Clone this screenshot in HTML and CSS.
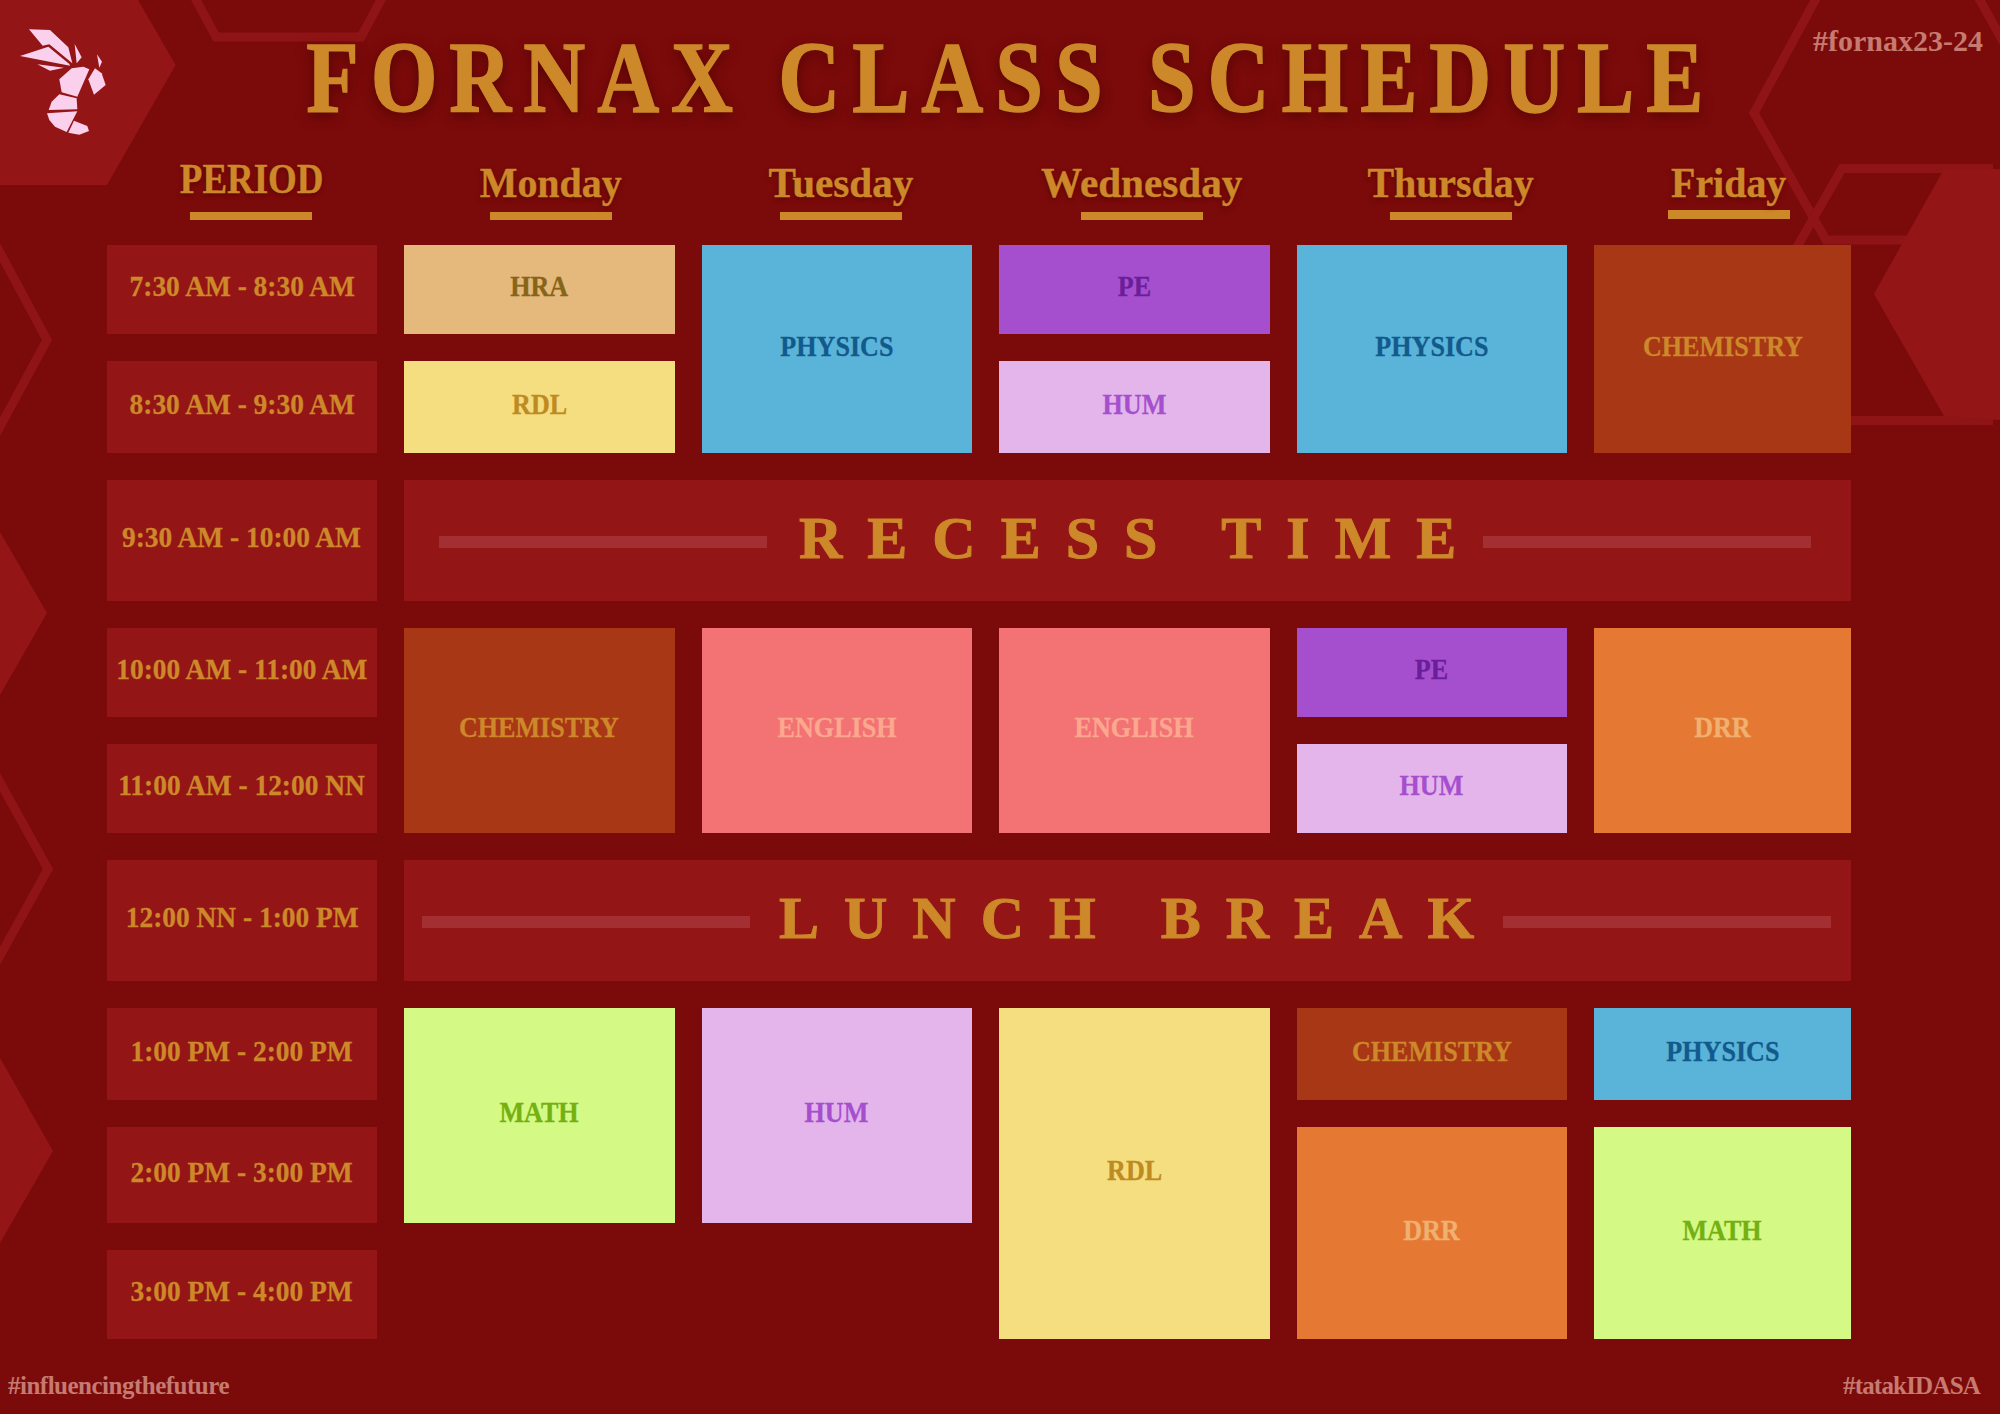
FILE: index.html
```html
<!DOCTYPE html>
<html lang="en">
<head>
<meta charset="utf-8">
<title>Fornax Class Schedule</title>
<link rel="stylesheet" href="styles.css">
</head>
<body>
<main class="page">
  <svg class="decor" viewBox="0 0 2000 1414" aria-hidden="true">
    <g class="decor-line">
      <path d="M194 -4 L216 37 H361 L383 -4"/>
      <path d="M1818 -5 L1754 113 L1826 240 H1960"/>
      <path d="M1977 -5 L2005 45"/>
      <path d="M1993 168.500 H1842 L1770 294 L1842 420.500 H1993"/>
      <path d="M-4 245 L47 340 L-4 434"/>
      <path d="M-4 775 L48 869 L-4 963"/>
    </g>
    <g class="decor-fill">
      <polygon points="0,0 138,0 175.600,65 107,185 0,185"/>
      <polygon points="1944,169 2000,169 2000,420 1944,416 1874,294"/>
      <polygon points="0,532 47,613 0,695"/>
      <polygon points="0,1058 53,1151 0,1243"/>
    </g>
  </svg>

  <svg class="logo" viewBox="0 0 180 190" aria-label="Fornax hornet logo">
    <g transform="scale(0.3333)">
      <polygon points="87,88 150,90 205,142 217,190 148,133 128,137"/>
      <polygon points="60,168 145,140 208,192 210,197"/>
      <polygon points="112,193 192,203 150,212"/>
      <polygon points="224,132 245,172 230,190"/>
      <polygon points="291,163 306,185 298,203"/>
      <polygon points="285,205 305,220 317,255 282,284 265,238"/>
      <polygon points="215,205 250,200 268,208 232,290 185,277 178,238"/>
      <polygon points="178,283 230,295 232,328 146,330 155,305"/>
      <polygon points="141,340 232,334 200,396 165,380 148,360"/>
      <polygon points="222,362 262,378 267,393 238,404 205,398"/>
    </g>
  </svg>

  <p class="tag tag-top">#fornax23-24</p>

  <header class="title-bar">
    <h1 class="title">FORNAX CLASS SCHEDULE</h1>
  </header>

  <div class="heads">
    <div class="head head-period"><span class="head-label">PERIOD</span><i class="head-rule"></i></div>
    <div class="head"><span class="head-label">Monday</span><i class="head-rule"></i></div>
    <div class="head head-wide"><span class="head-label">Tuesday</span><i class="head-rule"></i></div>
    <div class="head head-wide"><span class="head-label">Wednesday</span><i class="head-rule"></i></div>
    <div class="head"><span class="head-label">Thursday</span><i class="head-rule"></i></div>
    <div class="head head-friday"><span class="head-label">Friday</span><i class="head-rule"></i></div>
  </div>

  <section class="grid">
    <div class="time r1"><span>7:30 AM - 8:30 AM</span></div>
    <div class="time r2"><span>8:30 AM - 9:30 AM</span></div>
    <div class="time r3"><span>9:30 AM - 10:00 AM</span></div>
    <div class="time r4"><span>10:00 AM - 11:00 AM</span></div>
    <div class="time r5"><span>11:00 AM - 12:00 NN</span></div>
    <div class="time r6"><span>12:00 NN - 1:00 PM</span></div>
    <div class="time r7"><span>1:00 PM - 2:00 PM</span></div>
    <div class="time r8"><span>2:00 PM - 3:00 PM</span></div>
    <div class="time r9"><span>3:00 PM - 4:00 PM</span></div>

    <div class="cell hra mon r1"><span>HRA</span></div>
    <div class="cell rdl mon r2"><span>RDL</span></div>
    <div class="cell physics tue r1-2"><span>PHYSICS</span></div>
    <div class="cell pe wed r1"><span>PE</span></div>
    <div class="cell hum wed r2"><span>HUM</span></div>
    <div class="cell physics thu r1-2"><span>PHYSICS</span></div>
    <div class="cell chem fri r1-2"><span>CHEMISTRY</span></div>

    <div class="band band-recess r3">
      <i class="band-line"></i><span class="band-text">RECESS TIME</span><i class="band-line"></i>
    </div>

    <div class="cell chem mon r4-5"><span>CHEMISTRY</span></div>
    <div class="cell english tue r4-5"><span>ENGLISH</span></div>
    <div class="cell english wed r4-5"><span>ENGLISH</span></div>
    <div class="cell pe thu r4"><span>PE</span></div>
    <div class="cell hum thu r5"><span>HUM</span></div>
    <div class="cell drr fri r4-5"><span>DRR</span></div>

    <div class="band band-lunch r6">
      <i class="band-line"></i><span class="band-text">LUNCH BREAK</span><i class="band-line"></i>
    </div>

    <div class="cell math mon r7-8"><span>MATH</span></div>
    <div class="cell hum tue r7-8"><span>HUM</span></div>
    <div class="cell rdl wed r7-9"><span>RDL</span></div>
    <div class="cell chem thu r7"><span>CHEMISTRY</span></div>
    <div class="cell drr thu r8-9"><span>DRR</span></div>
    <div class="cell physics fri r7"><span>PHYSICS</span></div>
    <div class="cell math fri r8-9"><span>MATH</span></div>
  </section>

  <footer class="foot">
    <p class="tag">#influencingthefuture</p>
    <p class="tag tag-tatak">#tatakIDASA</p>
  </footer>
</main>
</body>
</html>
```

FILE: styles.css
```css
* { box-sizing: border-box; }
html, body { margin: 0; padding: 0; }
body { background: #7b0a0a; font-family: "Liberation Serif", "DejaVu Serif", serif; }

.page {
  position: relative;
  width: 2000px;
  height: 1414px;
  overflow: hidden;
  background: #7b0a0a;
  color: #cd8829;
  font-weight: 700;
}

.decor { position: absolute; left: 0; top: 0; width: 2000px; height: 1414px; }
.decor-line path { fill: none; stroke: #8f1416; stroke-width: 9; }
.decor-fill polygon { fill: #941515; }

.logo { position: absolute; left: 0; top: 0; width: 180px; height: 190px; }
.logo polygon { fill: #fbd0ec; }

.tag { margin: 0; font-size: 25px; line-height: 30px; color: #c67a70; letter-spacing: -0.5px; }
.tag-top { position: absolute; left: 1813px; top: 26px; font-size: 30px; letter-spacing: 0; }
.tag-tatak { letter-spacing: -0.8px; }

.title-bar { position: relative; height: 150px; display: flex; justify-content: center; }
.title {
  margin: 28px 0 0 22px;
  font-size: 101px;
  line-height: 100px;
  letter-spacing: 14px;
  white-space: nowrap;
  transform: scaleX(0.85);
  -webkit-text-stroke: 1.5px #cd8829;
  text-shadow: 0 4px 14px rgba(70, 0, 0, 0.75);
}

.heads {
  position: relative;
  height: 95px;
  padding: 0 0 25px 130px;
  display: grid;
  grid-template-columns: 241px 360px 220px 382px 236px 320px;
  align-items: end;
}
.head { display: flex; flex-direction: column; align-items: center; }
.head-label {
  font-size: 42px;
  line-height: 46px;
  white-space: nowrap;
  transform: scaleX(0.95);
  -webkit-text-stroke: 0.4px #cd8829;
  text-shadow: 0 2px 5px rgba(70, 0, 0, 0.6);
}
.head-rule { display: block; width: 122px; height: 8.500px; margin-top: 6px; background: #cd8829; }
.head-period .head-label { transform: scaleX(0.88); margin: 0 0 4px 3px; }
.head-wide .head-label { transform: scaleX(0.98); }
.head-friday { margin-bottom: 1.500px; }
.head-friday .head-rule { margin-top: 4.500px; }

.grid {
  position: relative;
  margin-left: 106.500px;
  display: grid;
  grid-template-columns: repeat(5, 270.500px) 257px;
  grid-template-rows: 89px 92px 121px 89px 89px 121px 92px 96px 89px;
  gap: 27px;
}

.time, .cell, .band {
  display: flex;
  align-items: center;
  justify-content: center;
  font-size: 29px;
  line-height: 32px;
  padding-bottom: 7px;
  white-space: nowrap;
}
.band { padding-bottom: 5px; }
.time { grid-column: 1; background: #941515; }
.time span { transform: scaleX(0.945); -webkit-text-stroke: 0.3px currentColor; }
.cell span { transform: scaleX(0.9); -webkit-text-stroke: 0.3px currentColor; }

.r1 { grid-row: 1; }
.r2 { grid-row: 2; }
.r3 { grid-row: 3; }
.r4 { grid-row: 4; }
.r5 { grid-row: 5; }
.r6 { grid-row: 6; }
.r7 { grid-row: 7; }
.r8 { grid-row: 8; }
.r9 { grid-row: 9; }
.r1-2 { grid-row: 1 / span 2; }
.r4-5 { grid-row: 4 / span 2; }
.r7-8 { grid-row: 7 / span 2; }
.r7-9 { grid-row: 7 / span 3; }
.r8-9 { grid-row: 8 / span 2; }

.mon { grid-column: 2; }
.tue { grid-column: 3; }
.wed { grid-column: 4; }
.thu { grid-column: 5; }
.fri { grid-column: 6; }

.hra { background: #e5b87c; color: #856518; }
.rdl { background: #f4de80; color: #bf8a22; }
.physics { background: #5ab4d9; color: #135a8c; }
.pe { background: #a64fce; color: #6b1e9a; }
.hum { background: #e3b5ea; color: #a64fce; }
.chem { background: #a83716; color: #cd8829; }
.english { background: #f37375; color: #fba88f; }
.drr { background: #e57933; color: #f0b070; }
.math { background: #d5f985; color: #74b011; }

.band { grid-column: 2 / span 5; background: #941515; justify-content: flex-start; }
.band-line { display: block; width: 328px; height: 12px; background: #a32f33; margin-top: 8px; }
.band-text { font-size: 60px; line-height: 64px; letter-spacing: 25px; -webkit-text-stroke: 1px #cd8829; }
.band-recess { padding-left: 35px; }
.band-recess .band-text { margin: 0 2px 0 32px; }
.band-lunch { padding-left: 18px; }
.band-lunch .band-text { margin: 0 4px 0 29px; }

.foot {
  position: relative;
  margin-top: 32px;
  padding: 0 20px 0 8px;
  display: flex;
  justify-content: space-between;
}
```
